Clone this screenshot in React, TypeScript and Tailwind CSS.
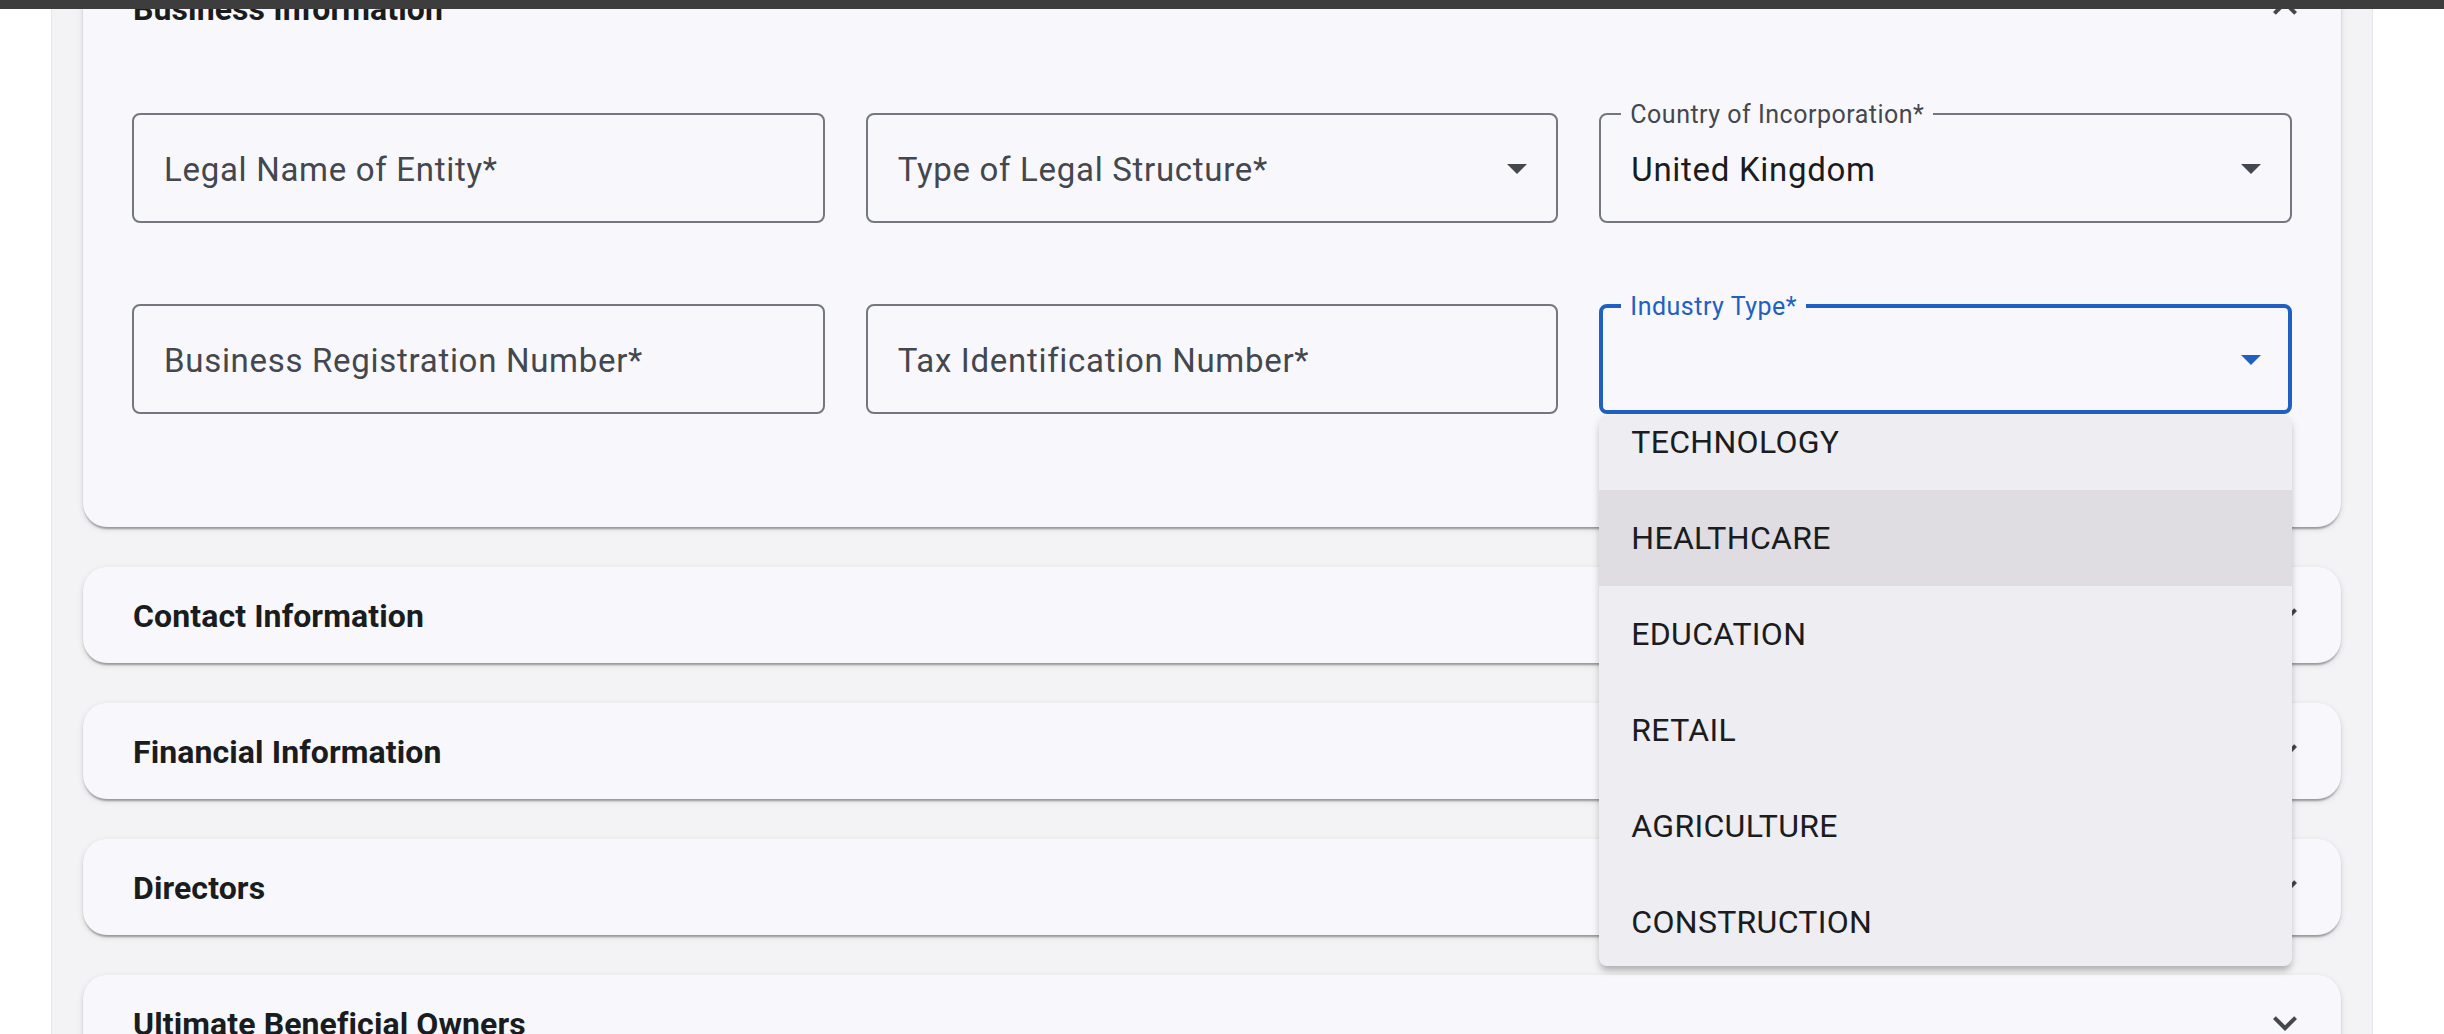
import clsx from "clsx";

const EXPAND_MORE = "M16.59 8.59 12 13.17 7.41 8.59 6 10l6 6 6-6z";
const EXPAND_LESS = "M12 8l-6 6 1.41 1.41L12 10.83l4.59 4.58L18 14z";
const ARROW_DROP = "M7 10l5 5 5-5z";

const INDUSTRIES = [
  "TECHNOLOGY",
  "HEALTHCARE",
  "EDUCATION",
  "RETAIL",
  "AGRICULTURE",
  "CONSTRUCTION",
];

function Icon({ d, className }: { d: string; className?: string }) {
  return (
    <svg viewBox="0 0 24 24" fill="currentColor" className={className} aria-hidden>
      <path d={d} />
    </svg>
  );
}

function TextInput({ label }: { label: string }) {
  return (
    <div className="flex h-[110px] items-center rounded-[8px] border-2 border-[#74777f] px-[30px] pt-[3px] text-[33px] tracking-[0.7px] text-[#44474e]">
      {label}
    </div>
  );
}

function SelectInput({
  label,
  value,
  focused = false,
  open = false,
}: {
  label: string;
  value?: string;
  focused?: boolean;
  open?: boolean;
}) {
  const shrink = Boolean(value) || focused;

  return (
    <div
      className={clsx(
        "relative flex h-[110px] items-center rounded-[8px] pt-[3px] text-[33px] tracking-[0.7px]",
        focused ? "border-4 border-[#2160c2] px-[28px]" : "border-2 border-[#74777f] px-[30px]",
      )}
    >
      {value && <span className="text-[#1a1c1e]">{value}</span>}
      {!shrink && <span className="text-[#44474e]">{label}</span>}

      {shrink && (
        <span
          className={clsx(
            "absolute -translate-y-1/2 bg-[#f8f8fc] px-[9px] text-[25px] leading-none tracking-[0.5px]",
            focused ? "left-[18px] top-[-2px] text-[#2160c2]" : "left-[20px] top-[-1px] text-[#44474e]",
          )}
        >
          {label}
        </span>
      )}

      <Icon
        d={ARROW_DROP}
        className={clsx(
          "absolute top-1/2 size-[48px] -translate-y-1/2",
          focused ? "right-[13px] text-[#2160c2]" : "right-[15px] text-[#44474e]",
        )}
      />

      {open && (
        <div className="absolute left-[-4px] right-[-4px] top-[calc(100%+5px)] z-10 h-[551px] overflow-hidden rounded-[8px] bg-[#eeedf1] shadow-[0_6px_6px_-2px_rgba(0,0,0,0.2),0_4px_10px_0_rgba(0,0,0,0.12)]">
          <ul className="-mt-[21px]">
            {INDUSTRIES.map((item) => (
              <li
                key={item}
                className={clsx(
                  "flex h-[96px] items-center px-[32px] text-[32px] tracking-[0.3px] text-[#1a1c1e]",
                  item === "HEALTHCARE" && "bg-[#dfdde2]",
                )}
              >
                {item}
              </li>
            ))}
          </ul>
        </div>
      )}
    </div>
  );
}

function SectionHeader({ title, expanded = false }: { title: string; expanded?: boolean }) {
  return (
    <div className="flex h-[96px] items-center justify-between pl-[50px] pr-[32px]">
      <h2 className="pt-[2px] text-[32px] font-bold tracking-[0.1px] text-[#1a1c1e]">{title}</h2>
      <Icon d={expanded ? EXPAND_LESS : EXPAND_MORE} className="size-[48px] text-[#44474e]" />
    </div>
  );
}

const CARD =
  "rounded-[24px] bg-[#f8f8fc] shadow-[0_4px_2px_-2px_rgba(0,0,0,0.2),0_2px_2px_0_rgba(0,0,0,0.14),0_2px_6px_0_rgba(0,0,0,0.12)]";

export default function App() {
  return (
    <div className="relative h-[1034px] overflow-hidden bg-white font-[Roboto,sans-serif]">
      {/* dark strip of the app bar above the scrolled form */}
      <div className="absolute inset-x-0 top-0 z-20 h-[9px] bg-[#3d3d3d]" />

      <main className="ml-[51px] flex h-full w-[2322px] flex-col border-x border-[#e6e6e9] bg-[#f3f3f5] px-[31px]">
        <div className="-mt-[40px] flex flex-col gap-[40px]">
          <section className={CARD}>
            <SectionHeader title="Business Information" expanded />
            <div className="grid grid-cols-3 gap-x-[41px] gap-y-[81px] px-[49px] pb-[113px] pt-[57px]">
              <TextInput label="Legal Name of Entity*" />
              <SelectInput label="Type of Legal Structure*" />
              <SelectInput label="Country of Incorporation*" value="United Kingdom" />
              <TextInput label="Business Registration Number*" />
              <TextInput label="Tax Identification Number*" />
              <SelectInput label="Industry Type*" focused open />
            </div>
          </section>

          {["Contact Information", "Financial Information", "Directors", "Ultimate Beneficial Owners"].map(
            (title) => (
              <section key={title} className={CARD}>
                <SectionHeader title={title} />
              </section>
            ),
          )}
        </div>
      </main>
    </div>
  );
}
